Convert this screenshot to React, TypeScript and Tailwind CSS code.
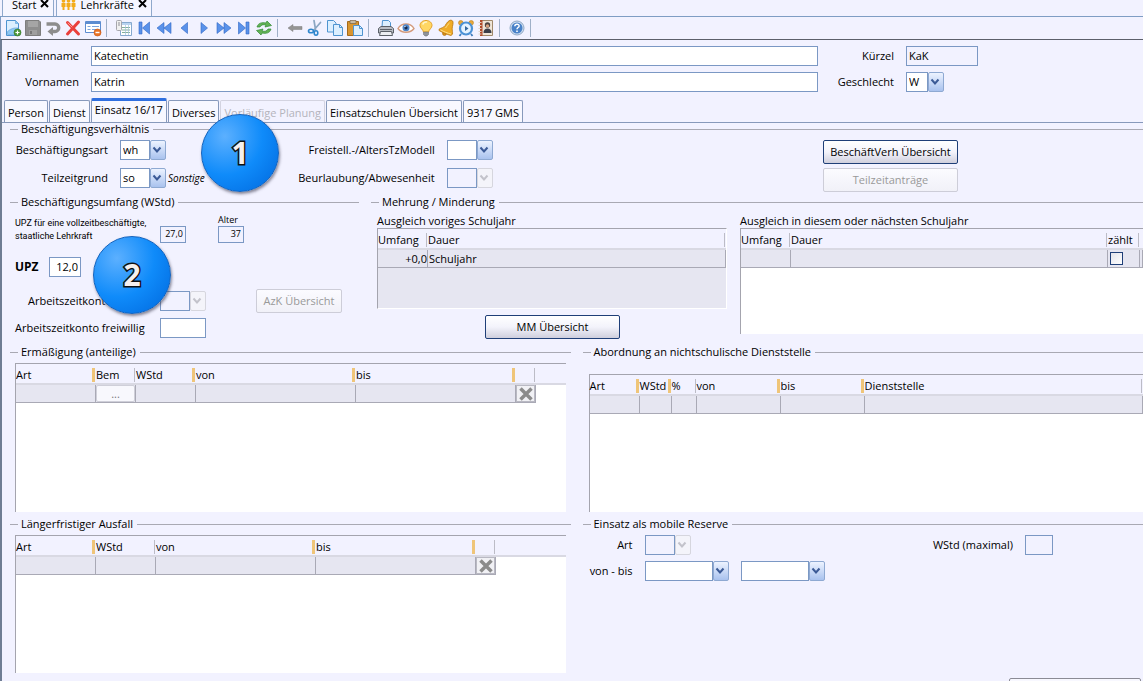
import type { ReactNode } from 'react'
import clsx from 'clsx'

/* ---------- Toolbar icons ---------- */

const Icon = ({ children }: { children: ReactNode }) => (
  <svg width="18" height="18" viewBox="0 0 18 18" fill="none" aria-hidden="true">
    {children}
  </svg>
)

const sheet = { fill: '#dcefff', stroke: '#4f94d0' }
const nav = { fill: '#5a92ea', stroke: '#2f66c4', strokeWidth: 0.6 }

const NewIcon = () => (
  <Icon>
    <path d="M2.5 1.5h9l3 3v12h-12z" {...sheet} />
    <path d="M11.5 1.5v3h3M3.5 12.5c3-3 7-4 10.500-3.500v6.500h-10.500z" fill="#8cc8f4" stroke="#4f94d0" strokeWidth="0.500" />
    <circle cx="13.500" cy="13.500" r="3.500" fill="#4f9a3c" stroke="#2f7424" strokeWidth="0.600" />
    <path d="M13.500 11.500v4M11.500 13.500h4" stroke="#fff" strokeWidth="1.200" />
  </Icon>
)

const SaveIcon = () => (
  <Icon>
    <path d="M1.500 1.500h13.500l1.500 1.500v13.500h-15z" fill="#8e8e8e" stroke="#7d7d7d" />
    <path d="M4 2h10v6h-10z" fill="#a5a5a5" />
    <path d="M5 11h8v5h-8z" fill="#9f9f9f" />
    <path d="M6 12h2v3h-2z" fill="#777" />
  </Icon>
)

const UndoIcon = () => (
  <Icon>
    <path d="M2.500 5h8.500a3.500 3.500 0 0 1 0 7.500h-3" stroke="#8d8d8d" strokeWidth="3.400" />
    <path d="M9 8v9l-5.500-4.500z" fill="#8d8d8d" />
  </Icon>
)

const DeleteIcon = () => (
  <Icon>
    <path d="M3.500 3.500l11 11.500M14.500 3l-11 12" stroke="#ea403b" strokeWidth="3" strokeLinecap="round" />
    <path d="M4 4l4 4" stroke="#ff9a92" strokeWidth="1" strokeLinecap="round" />
  </Icon>
)

const FormIcon = () => (
  <Icon>
    <path d="M1.500 2.500h15v11h-15z" fill="#fff" stroke="#5c8cd0" />
    <path d="M2 3h14v2h-14z" fill="#5c8cd0" />
    <path d="M3.500 7.500h3M8 7.500h7M3.500 10.500h3M8 10.500h5" stroke="#7ba4dc" />
    <circle cx="13.500" cy="13.500" r="3.500" fill="#ea7424" stroke="#c8520e" strokeWidth="0.600" />
    <path d="M11.500 13.500h4" stroke="#fff" strokeWidth="1.400" />
  </Icon>
)

const ListIcon = () => (
  <Icon>
    <path d="M5.500 3.500h11v13h-11z" fill="#fff" stroke="#86a9cf" />
    <path d="M6 4h10v2h-10z" fill="#b9d3ef" />
    <path d="M7 8.500h8M7 11h8M7 13.500h8" stroke="#84b09a" />
    <path d="M10.500 6v10M13.500 6v10" stroke="#a5c2e0" strokeWidth="0.700" />
    <rect x="1.500" y="1.500" width="5" height="10" rx="1" fill="#f0f0f0" stroke="#a6a6ac" />
    <path d="M4 3v4" stroke="#8f8f96" />
  </Icon>
)

const FirstIcon = () => (
  <Icon>
    <path d="M4 3h3v12h-3zM14.500 3v12l-7-6z" {...nav} />
  </Icon>
)
const FastBackIcon = () => (
  <Icon>
    <path d="M9 3.500v11l-7-5.500zM16 3.500v11l-7-5.500z" {...nav} />
  </Icon>
)
const BackIcon = () => (
  <Icon>
    <path d="M12.500 3.500v11l-6.500-5.500z" {...nav} />
  </Icon>
)
const NextIcon = () => (
  <Icon>
    <path d="M6 3.500v11l6.500-5.500z" {...nav} />
  </Icon>
)
const FastNextIcon = () => (
  <Icon>
    <path d="M2 3.500v11l7-5.500zM9 3.500v11l7-5.500z" {...nav} />
  </Icon>
)
const LastIcon = () => (
  <Icon>
    <path d="M3.500 3v12l7-6zM11 3h3v12h-3z" {...nav} />
  </Icon>
)

const RefreshIcon = () => (
  <Icon>
    <path d="M2 8c1-4 5-5 9-4l1-2 4.500 4.500-6.500 1.500 1-2c-3-.8-5 0-6 2z" fill="#63b256" stroke="#2f8a30" strokeWidth="0.700" />
    <path d="M16 10c-1 4-5 5-9 4l-1 2-4.500-4.500 6.500-1.500-1 2c3 .8 5 0 6-2z" fill="#63b256" stroke="#2f8a30" strokeWidth="0.700" />
  </Icon>
)

const ArrowLeftIcon = () => (
  <Icon>
    <path d="M2 9l5-3.500v2h9v3h-9v2z" fill="#949494" stroke="#7d7d7d" strokeWidth="0.500" />
  </Icon>
)

const CutIcon = () => (
  <Icon>
    <path d="M8 1.500l1.500 9M14.500 3.500l-7 8" stroke="#8ba6c2" strokeWidth="1.700" strokeLinecap="round" />
    <ellipse cx="5" cy="12" rx="2.500" ry="1.800" stroke="#2f86cc" strokeWidth="1.600" />
    <ellipse cx="10" cy="14" rx="1.800" ry="2.200" stroke="#2f86cc" strokeWidth="1.600" />
  </Icon>
)

const CopyIcon = () => (
  <Icon>
    <path d="M1.500 1.500h6l2.500 2.500v9h-8.500z" {...sheet} />
    <path d="M7.500 5.500h6l3 3v8h-9z" {...sheet} />
    <path d="M13.500 5.500v3h3" stroke="#4f94d0" />
  </Icon>
)

const PasteIcon = () => (
  <Icon>
    <path d="M1.500 2.500h11v14h-11z" fill="#d9952f" stroke="#a66a1c" />
    <path d="M4 1.500h6v3h-6z" fill="#c7b9a2" stroke="#7c6543" strokeWidth="0.700" />
    <path d="M7.500 6.500h6l3 3v7h-9z" {...sheet} />
    <path d="M13.500 6.500v3h3" stroke="#4f94d0" />
  </Icon>
)

const PrintIcon = () => (
  <Icon>
    <path d="M5 8l.5-6.500h6l2 2v4.500z" {...sheet} />
    <path d="M1.500 9.500l2.500-2h10l2.500 2v4.500h-15z" fill="#b9bdc4" stroke="#5b6068" />
    <path d="M3.500 12.500h11l1 4h-13z" fill="#eceef2" stroke="#5b6068" />
    <path d="M3 10.500h12" stroke="#5b6068" />
  </Icon>
)

const EyeIcon = () => (
  <Icon>
    <path d="M1 9.500c3.500-6 12.500-6 16 0-3.500 5-12.500 5-16 0z" fill="#fff" stroke="#d39a7c" strokeWidth="1.400" />
    <circle cx="9" cy="8.800" r="3.500" fill="#4d84c8" />
    <circle cx="9" cy="8.800" r="1.600" fill="#16284a" />
    <circle cx="8" cy="7.600" r="0.700" fill="#fff" />
  </Icon>
)

const BulbIcon = () => (
  <Icon>
    <path d="M9 1.500c4 0 6 2.500 6 5s-3 4-3.500 6.500h-5c-.5-2.500-3.500-4-3.500-6.500s2-5 6-5z" fill="#ffd764" stroke="#e59f26" />
    <path d="M6 5c.5-1.500 2-2 3.500-2" stroke="#fff6cf" strokeWidth="1.500" strokeLinecap="round" />
    <path d="M6.500 13h5v2.500l-1.500 1.500h-2l-1.500-1.500z" fill="#8f9399" stroke="#63676d" strokeWidth="0.500" />
  </Icon>
)

const BellIcon = () => (
  <Icon>
    <circle cx="7.500" cy="14.500" r="2" fill="#d88f18" stroke="#a96a0c" strokeWidth="0.600" />
    <path
      d="M14 1l1.800 1.200c.8 2-.4 4.500-.6 7-.1 2.500.6 4 .3 6l-1.500 1.300c-4-1-8.500-3-12-5l.2-1.500c2-1 4.300-1.200 6-3.500 1.500-2.500 2.800-4.800 5.800-5.500z"
      fill="#f0ac28"
      stroke="#b87510"
      strokeWidth="0.800"
    />
    <path d="M3.500 10.800c3.500 2 7 3.300 10.500 4.200M12.500 4c-2 1.500-2.500 3.500-4 5" stroke="#ffe08a" />
  </Icon>
)

const ClockIcon = () => (
  <Icon>
    <circle cx="3.800" cy="3.800" r="2.300" fill="#e8a93b" stroke="#b97c1b" strokeWidth="0.600" />
    <circle cx="14.200" cy="3.800" r="2.300" fill="#e8a93b" stroke="#b97c1b" strokeWidth="0.600" />
    <path d="M4 15l-1.500 2M14 15l1.500 2" stroke="#3f7cbc" strokeWidth="1.800" />
    <circle cx="9" cy="9.500" r="6" fill="#e6f3ff" stroke="#4c92d6" strokeWidth="2.200" />
    <path d="M8 7v5l3.500-2.500z" fill="#35699f" />
  </Icon>
)

const BookIcon = () => (
  <Icon>
    <path d="M3.500 1.500h12v15h-12z" fill="#efe6d8" stroke="#a08a6c" />
    <path d="M3 1h2.500v16h-2.500z" fill="#b04a28" />
    <path d="M1.500 3.500h3M1.500 6.500h3M1.500 9.500h3M1.500 12.500h3M1.500 15h3" stroke="#dcd2c4" />
    <circle cx="10.500" cy="6" r="2.700" fill="#4a4340" />
    <circle cx="10.500" cy="6.900" r="1.700" fill="#d9a27c" />
    <path d="M6.500 14c0-3 1.500-4.500 4-4.500s4 1.500 4 4.500z" fill="#3b3f49" />
  </Icon>
)

const HelpIcon = () => (
  <Icon>
    <circle cx="9" cy="9" r="7" fill="#cfdef0" stroke="#91a9c6" />
    <circle cx="9" cy="9" r="5.500" fill="#4a82c8" />
    <path d="M6.800 7.300c.2-3 4.600-2.600 4.300-.1-.2 1.300-2 1.400-2.100 3" stroke="#fff" strokeWidth="1.500" />
    <path d="M8.200 11.500h1.600v1.600h-1.600z" fill="#fff" />
  </Icon>
)

const PeopleIcon = () => (
  <svg width="15" height="11" viewBox="0 0 15 11" fill="#f3ac1b" aria-hidden="true">
    <circle cx="2.500" cy="1" r="1.800" />
    <circle cx="7.500" cy="1" r="1.800" />
    <circle cx="12.500" cy="1" r="1.800" />
    <path d="M.5 3h4v4h-1v3h-2v-3h-1zM5.500 3h4v4h-1v3h-2v-3h-1zM10.500 3h4v4h-1v3h-2v-3h-1z" />
  </svg>
)

const CloseIcon = () => (
  <svg width="9" height="9" viewBox="0 0 9 9" fill="none" stroke="#000" strokeWidth="2" aria-hidden="true">
    <path d="M1 0l7 7M8 0l-7 7" />
  </svg>
)

const toolGroups = [
  [
    { label: 'Neu', icon: <NewIcon /> },
    { label: 'Speichern', icon: <SaveIcon /> },
    { label: 'Rückgängig', icon: <UndoIcon /> },
    { label: 'Löschen', icon: <DeleteIcon /> },
    { label: 'Formular leeren', icon: <FormIcon /> },
  ],
  [
    { label: 'Liste', icon: <ListIcon /> },
    { label: 'Erster', icon: <FirstIcon /> },
    { label: 'Schnell zurück', icon: <FastBackIcon /> },
    { label: 'Zurück', icon: <BackIcon /> },
    { label: 'Weiter', icon: <NextIcon /> },
    { label: 'Schnell vor', icon: <FastNextIcon /> },
    { label: 'Letzter', icon: <LastIcon /> },
    { label: 'Aktualisieren', icon: <RefreshIcon /> },
  ],
  [
    { label: 'Zurückspringen', icon: <ArrowLeftIcon /> },
    { label: 'Ausschneiden', icon: <CutIcon /> },
    { label: 'Kopieren', icon: <CopyIcon /> },
    { label: 'Einfügen', icon: <PasteIcon /> },
  ],
  [
    { label: 'Drucken', icon: <PrintIcon /> },
    { label: 'Ansicht', icon: <EyeIcon /> },
    { label: 'Hinweis', icon: <BulbIcon /> },
    { label: 'Meldungen', icon: <BellIcon /> },
    { label: 'Termine', icon: <ClockIcon /> },
    { label: 'Adressbuch', icon: <BookIcon /> },
  ],
  [{ label: 'Hilfe', icon: <HelpIcon /> }],
]

const Toolbar = () => (
  <div role="toolbar" className="flex h-6 shrink-0 items-center border-y border-l border-t-[#7f9dc4] border-b-[#5c5f6a] border-l-[#7f9dc4] pl-0.5">
    {toolGroups.map((group) => (
      <div key={group[0].label} className="flex items-center">
        {group.map((tool) => (
          <button key={tool.label} type="button" aria-label={tool.label} className="flex size-5 items-center justify-center">
            {tool.icon}
          </button>
        ))}
        <span className="mr-[7px] ml-[3px] h-[18px] w-px bg-[#9fb0c8]" />
      </div>
    ))}
  </div>
)

/* ---------- Form controls ---------- */

const labelClass = 'shrink-0 text-right whitespace-nowrap'

type FieldProps = {
  id: string
  label?: string
  value?: string
  readOnly?: boolean
  className?: string
}

const Field = ({ id, label, value = '', readOnly, className }: FieldProps) => (
  <input
    id={id}
    type="text"
    aria-label={label}
    defaultValue={value}
    readOnly={readOnly}
    className={clsx(
      'border border-[#7b98c4] px-0.5 pb-0.5 outline-none',
      readOnly ? 'bg-[#f2f2ff]' : 'bg-white',
      className,
    )}
  />
)

type ComboProps = {
  id: string
  label?: string
  value?: string
  disabled?: boolean
  className?: string
}

const Combo = ({ id, label, value = '', disabled, className }: ComboProps) => (
  <div className={clsx('relative h-5 shrink-0', className ?? 'w-[46px]')}>
    <select
      id={id}
      aria-label={label}
      disabled={disabled}
      defaultValue={value}
      className="h-5 w-full appearance-none pr-4 pl-[3px] opacity-100 outline-none"
    >
      <option value={value}>{value}</option>
    </select>
    <span
      className={clsx(
        'pointer-events-none absolute inset-y-0 right-4 left-0 -z-10 border border-[#7b98c4]',
        disabled ? 'bg-[#f2f2ff]' : 'bg-white',
      )}
    />
    <span
      className={clsx(
        'pointer-events-none absolute inset-y-0 right-0 flex w-4 items-center justify-center rounded-xs border pr-0.5',
        disabled
          ? 'border-[#d6d6de] bg-[#f4f4fa]'
          : 'border-[#8ea9d2] bg-linear-to-b from-[#edf3ff] to-[#a9c2ee]',
      )}
    >
      <svg width="10" height="8" viewBox="0 0 10 8" fill="none" aria-hidden="true">
        <path d="M1.500 1.500L5 5.500L8.500 1.500" stroke={disabled ? '#c3c3cb' : '#3b5a96'} strokeWidth="2" />
      </svg>
    </span>
  </div>
)

const PushButton = ({ children, disabled, className }: { children: ReactNode; disabled?: boolean; className?: string }) => (
  <button
    type="button"
    disabled={disabled}
    className={clsx(
      'h-6 rounded-xs border bg-linear-to-b',
      disabled
        ? 'border-[#cdcdd8] from-[#fbfbff] to-[#f1f1f8] text-[#999]'
        : 'border-[#1f3f78] from-white via-[#f3f3fb] to-[#cfcfdd]',
      className,
    )}
  >
    {children}
  </button>
)

const Group = ({ title, children, className }: { title: string; children: ReactNode; className?: string }) => (
  <section className={clsx('min-w-0', className)}>
    <div className="flex h-3 items-center">
      <span className="h-px w-2 bg-[#a9a9b3]" />
      <h2 className="mr-1 ml-[3px] whitespace-nowrap">{title}</h2>
      <span className="h-px flex-1 bg-[#a9a9b3]" />
    </div>
    {children}
  </section>
)

const Badge = ({ children, className }: { children: ReactNode; className: string }) => (
  <div
    className={clsx(
      'absolute z-10 flex size-[78px] items-center justify-center rounded-full border border-[#1463bd] bg-radial-[at_30%_28%] from-[#5cb0ff] via-[#0f8bfa] to-[#0067dc] shadow-[1px_2px_3px_rgba(60,60,80,0.6)]',
      className,
    )}
  >
    <span className="font-['Noto_Sans'] text-[30px] leading-none font-bold text-[#f6f0ee] [-webkit-text-stroke:3px_#111] [paint-order:stroke_fill]">
      {children}
    </span>
  </div>
)

/* ---------- Tables ---------- */

type Column = {
  label: string
  width?: string
  end?: 'grip' | 'line'
  cell?: ReactNode
  filler?: boolean
}

const DataTable = ({ label, columns, className }: { label: string; columns: Column[]; className?: string }) => (
  <div className={clsx('border-t border-l border-[#a4a4ae]', className ?? 'bg-white')}>
    <table aria-label={label} className="w-full table-fixed border-separate border-spacing-0">
      <thead>
        <tr>
          {columns.map((column, i) => (
            <th
              key={i}
              scope="col"
              className={clsx('h-[21px] border-b-2 border-[#d9d9e3] bg-[#f2f2ff] p-0 font-normal', column.width)}
            >
              <div className="flex items-center pt-0.5">
                <span className="flex-1 text-left whitespace-nowrap">{column.label}</span>
                {column.end === 'grip' && <span className="mr-px h-[14px] w-[3px] bg-[#efc579]" />}
                {column.end === 'line' && <span className="mr-px h-[14px] w-px bg-[#bcbcc6]" />}
              </div>
            </th>
          ))}
        </tr>
      </thead>
      <tbody>
        <tr>
          {columns.map((column, i) => (
            <td
              key={i}
              className={clsx(
                'h-[18px] p-0 leading-[17px]',
                !column.filler && 'border-r border-b border-[#a9a9b5] bg-[#e6e6f1]',
              )}
            >
              {column.cell}
            </td>
          ))}
        </tr>
      </tbody>
    </table>
  </div>
)

const RemoveButton = () => (
  <button type="button" aria-label="Zeile entfernen" className="flex h-[17px] w-full items-center justify-center border border-[#b9b9c3] bg-[#f1f1f5]">
    <svg width="14" height="14" viewBox="0 0 14 14" fill="none" stroke="#8b8b8b" strokeWidth="3.500" aria-hidden="true">
      <path d="M1.500 1.500l11 11M12.500 1.500l-11 11" />
    </svg>
  </button>
)

const previousYear: Column[] = [
  { label: 'Umfang', width: 'w-[50px]', end: 'line', cell: <div className="text-right">+0,0</div> },
  { label: 'Dauer', end: 'line', cell: <div className="pl-px">Schuljahr</div> },
]

const currentYear: Column[] = [
  { label: 'Umfang', width: 'w-[50px]', end: 'line' },
  { label: 'Dauer', end: 'line' },
  {
    label: 'zählt',
    width: 'w-8',
    end: 'line',
    cell: (
      <input
        type="checkbox"
        aria-label="zählt"
        className="ml-0.5 block size-[13px] appearance-none border border-[#1f3f78] bg-linear-to-br from-[#e3e3ea] to-white"
      />
    ),
  },
  { label: '', width: 'w-[3px]' },
]

const reductions: Column[] = [
  { label: 'Art', width: 'w-20', end: 'grip' },
  {
    label: 'Bem',
    width: 'w-10',
    end: 'line',
    cell: (
      <button type="button" aria-label="Bemerkung" className="block h-[17px] w-full rounded-xs border border-[#cfcfd9] bg-[#f8f8fd] leading-[14px] text-[#777]">
        ...
      </button>
    ),
  },
  { label: 'WStd', width: 'w-[60px]', end: 'grip' },
  { label: 'von', width: 'w-40', end: 'grip' },
  { label: 'bis', width: 'w-40', end: 'grip' },
  { label: '', width: 'w-5', end: 'line', cell: <RemoveButton /> },
  { label: '', filler: true },
]

const secondments: Column[] = [
  { label: 'Art', width: 'w-[50px]', end: 'grip' },
  { label: 'WStd', width: 'w-8', end: 'grip' },
  { label: '%', width: 'w-[25px]', end: 'line' },
  { label: 'von', width: 'w-[84px]', end: 'grip' },
  { label: 'bis', width: 'w-[84px]', end: 'grip' },
  { label: 'Dienststelle', end: 'line' },
]

const absences: Column[] = [
  { label: 'Art', width: 'w-20', end: 'grip' },
  { label: 'WStd', width: 'w-[60px]', end: 'line' },
  { label: 'von', width: 'w-40', end: 'grip' },
  { label: 'bis', width: 'w-40', end: 'grip' },
  { label: '', width: 'w-5', end: 'line', cell: <RemoveButton /> },
  { label: '', filler: true },
]

/* ---------- Page sections ---------- */

const WindowTabs = () => (
  <div className="flex h-4 shrink-0 gap-0.5 pl-0.5">
    {['Start', 'Lehrkräfte'].map((name) => (
      <div key={name} className="flex h-4 items-start gap-1 border-x border-[#8fa8cc] bg-[#f6f6ff] px-1">
        {name === 'Lehrkräfte' ? <PeopleIcon /> : <span className="w-px" />}
        <button type="button" className="leading-[10px]">
          {name}
        </button>
        <button type="button" aria-label={`${name} schließen`}>
          <CloseIcon />
        </button>
      </div>
    ))}
  </div>
)

const PersonForm = () => (
  <div className="flex pt-1.5">
    <div className="flex flex-1 flex-col gap-1.5">
      <div className="flex items-center gap-3">
        <label htmlFor="familienname" className={clsx(labelClass, 'w-[77px]')}>
          Familienname
        </label>
        <Field id="familienname" value="Katechetin" className="h-5 min-w-0 flex-1" />
      </div>
      <div className="flex items-center gap-3">
        <label htmlFor="vornamen" className={clsx(labelClass, 'w-[77px]')}>
          Vornamen
        </label>
        <Field id="vornamen" value="Katrin" className="h-5 min-w-0 flex-1" />
      </div>
    </div>
    <div className="flex w-[325px] flex-col gap-1.5">
      <div className="flex items-center gap-3">
        <label htmlFor="kuerzel" className={clsx(labelClass, 'w-[76px]')}>
          Kürzel
        </label>
        <Field id="kuerzel" value="KaK" readOnly className="h-5 w-[72px]" />
      </div>
      <div className="flex items-center gap-3">
        <label htmlFor="geschlecht" className={clsx(labelClass, 'w-[76px]')}>
          Geschlecht
        </label>
        <Combo id="geschlecht" value="W" className="w-[38px]" />
      </div>
    </div>
  </div>
)

const tabs = ['Person', 'Dienst', 'Einsatz 16/17', 'Diverses', 'Vorläufige Planung', 'Einsatzschulen Übersicht', '9317 GMS']

const PageTabs = () => (
  <div role="tablist" className="mt-[7px] flex h-6 items-end gap-px border-b border-[#8799bb] pl-0.5">
    {tabs.map((tab) => {
      const active = tab === 'Einsatz 16/17'
      const disabled = tab === 'Vorläufige Planung'
      return (
        <button
          key={tab}
          type="button"
          role="tab"
          aria-selected={active}
          disabled={disabled}
          className={clsx(
            'rounded-t-xs border-x px-[3px] whitespace-nowrap',
            active
              ? 'h-6 border-t-3 border-x-[#8799bb] border-t-[#2f6fe0] bg-[#f8f8ff] pb-1'
              : 'h-[22px] border-t pt-0.5',
            !active && (disabled ? 'border-[#d3d3e0] text-[#b4b4bc]' : 'border-[#8799bb] bg-[#f8f8ff]'),
          )}
        >
          {tab}
        </button>
      )
    })}
  </div>
)

const Employment = () => (
  <Group title="Beschäftigungsverhältnis" className="relative h-[73px]">
    <div className="flex pt-[5px]">
      <div className="flex flex-col gap-2">
        <div className="flex items-center gap-3">
          <label htmlFor="beschaeftigungsart" className={clsx(labelClass, 'w-[98px]')}>
            Beschäftigungsart
          </label>
          <Combo id="beschaeftigungsart" value="wh" />
        </div>
        <div className="flex items-center gap-3">
          <label htmlFor="teilzeitgrund" className={clsx(labelClass, 'w-[98px]')}>
            Teilzeitgrund
          </label>
          <div className="flex items-center gap-0.5">
            <Combo id="teilzeitgrund" value="so" />
            <span className="text-[10px] italic">Sonstige</span>
          </div>
        </div>
      </div>
      <div className="ml-5 flex flex-col gap-2">
        <div className="flex items-center gap-3">
          <label htmlFor="freistellung" className={clsx(labelClass, 'w-[210px]')}>
            Freistell.-/AltersTzModell
          </label>
          <Combo id="freistellung" />
        </div>
        <div className="flex items-center gap-3">
          <label htmlFor="beurlaubung" className={clsx(labelClass, 'w-[210px]')}>
            Beurlaubung/Abwesenheit
          </label>
          <Combo id="beurlaubung" disabled />
        </div>
      </div>
      <div className="mr-[185px] ml-auto flex w-[135px] flex-col gap-1">
        <PushButton>BeschäftVerh Übersicht</PushButton>
        <PushButton disabled>Teilzeitanträge</PushButton>
      </div>
    </div>
    <Badge className="top-[-9px] left-[191px]">1</Badge>
  </Group>
)

const Workload = () => (
  <Group title="Beschäftigungsumfang (WStd)" className="relative">
    <div className="flex flex-col pt-[5px] pl-[5px]">
      <div className="flex items-end text-[9px]">
        <label htmlFor="upzVoll" className="w-[145px] font-['Roboto'] leading-[13px] whitespace-nowrap">
          UPZ für eine vollzeitbeschäftigte,
          <br />
          staatliche Lehrkraft
        </label>
        <Field id="upzVoll" value="27,0" readOnly className="h-[17px] w-[26px] text-right" />
        <div className="ml-8 flex flex-col">
          <label htmlFor="alter" className="leading-[13px]">
            Alter
          </label>
          <Field id="alter" value="37" readOnly className="h-[17px] w-[26px] text-right" />
        </div>
      </div>
      <div className="mt-[14px] flex items-center">
        <label htmlFor="upz" className="w-[34px] text-xs font-bold">
          UPZ
        </label>
        <Field id="upz" value="12,0" className="h-5 w-8 text-right" />
      </div>
      <div className="mt-3 flex items-center">
        <label htmlFor="azk" className="w-[145px] pl-[13px]">
          Arbeitszeitkonto
        </label>
        <Combo id="azk" disabled />
        <PushButton disabled className="ml-[50px] w-[86px]">
          AzK Übersicht
        </PushButton>
      </div>
      <div className="mt-[5px] flex items-center">
        <label htmlFor="azkFreiwillig" className="w-[145px] whitespace-nowrap">
          Arbeitszeitkonto freiwillig
        </label>
        <Field id="azkFreiwillig" className="h-5 w-[46px]" />
      </div>
    </div>
    <Badge className="top-10 left-[83px]">2</Badge>
  </Group>
)

const Adjustments = () => (
  <Group title="Mehrung / Minderung">
    <div className="flex gap-[13px] pt-1.5 pl-1.5">
      <div className="flex w-[350px] flex-col">
        <h3 className="leading-[14px]">Ausgleich voriges Schuljahr</h3>
        <DataTable
          label="Ausgleich voriges Schuljahr"
          columns={previousYear}
          className="h-[81px] border-r border-b border-r-white border-b-white bg-[#e6e6f1]"
        />
        <PushButton className="mt-1.5 ml-[108px] w-[135px]">MM Übersicht</PushButton>
      </div>
      <div className="flex min-w-0 flex-1 flex-col">
        <h3 className="leading-[14px]">Ausgleich in diesem oder nächsten Schuljahr</h3>
        <DataTable label="Ausgleich in diesem oder nächsten Schuljahr" columns={currentYear} className="h-[106px] bg-white" />
      </div>
    </div>
  </Group>
)

const MobileReserve = () => (
  <Group title="Einsatz als mobile Reserve">
    <div className="flex flex-col gap-1.5 pt-[5px]">
      <div className="flex items-center gap-3">
        <label htmlFor="reserveArt" className={clsx(labelClass, 'w-[50px]')}>
          Art
        </label>
        <Combo id="reserveArt" disabled />
        <label htmlFor="wstdMax" className={clsx(labelClass, 'ml-auto')}>
          WStd (maximal)
        </label>
        <Field id="wstdMax" readOnly className="mr-[90px] h-5 w-7" />
      </div>
      <div className="flex items-center gap-3">
        <label htmlFor="reserveVon" className={clsx(labelClass, 'w-[50px]')}>
          von - bis
        </label>
        <Combo id="reserveVon" className="w-[84px]" />
        <Combo id="reserveBis" label="bis" className="w-[84px]" />
      </div>
    </div>
  </Group>
)

export default function App() {
  return (
    <div className="isolate flex h-screen flex-col overflow-hidden bg-[#f2f2ff] font-['Open_Sans','Noto_Sans',sans-serif] text-[11px] leading-4 text-black">
      <WindowTabs />
      <Toolbar />
      <main className="flex-1 border-l-2 border-[#6f7d93]">
        <PersonForm />
        <PageTabs />
        <div className="pl-2">
          <Employment />
          <div className="grid grid-cols-[349px_1fr] gap-3">
            <Workload />
            <Adjustments />
          </div>
          <div className="mt-[7px] grid grid-cols-2 gap-3">
            <Group title="Ermäßigung (anteilige)">
              <div className="px-[5px] pt-[5px]">
                <DataTable label="Ermäßigung" columns={reductions} className="h-[149px] bg-white" />
              </div>
            </Group>
            <Group title="Abordnung an nichtschulische Dienststelle">
              <div className="pt-4 pl-1.5">
                <DataTable label="Abordnung" columns={secondments} className="h-[138px] bg-white" />
              </div>
            </Group>
          </div>
          <div className="mt-1.5 grid grid-cols-2 gap-3">
            <Group title="Längerfristiger Ausfall">
              <div className="px-[5px] pt-[5px]">
                <DataTable label="Längerfristiger Ausfall" columns={absences} className="h-[138px] bg-white" />
              </div>
            </Group>
            <MobileReserve />
          </div>
        </div>
        <div className="flex justify-end pt-[5px] pr-0.5">
          <button type="button" aria-label="Schließen" className="h-6 w-[132px] rounded-xs border border-[#8b8b95] bg-[#f8f8ff]" />
        </div>
      </main>
    </div>
  )
}
